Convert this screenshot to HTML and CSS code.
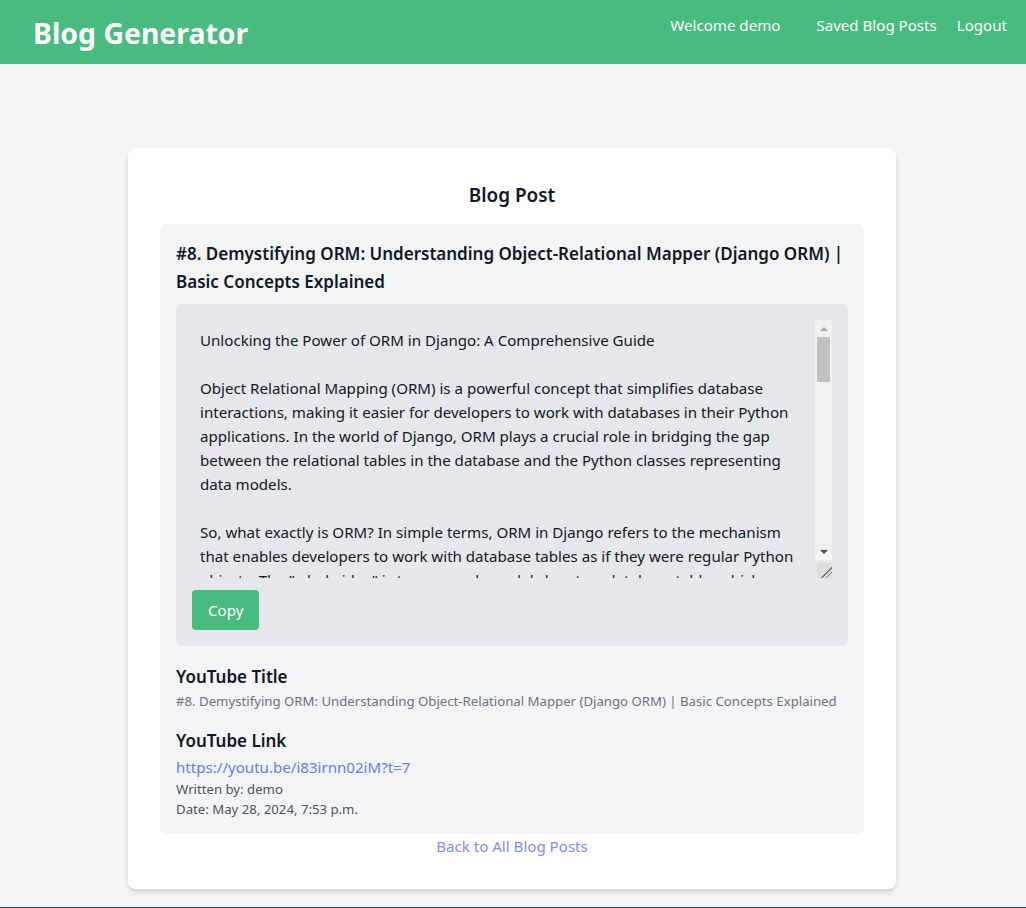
FILE: index.html
```html
<!DOCTYPE html>
<html lang="en">
<head>
<meta charset="utf-8">
<title>Blog Generator</title>
<link rel="stylesheet" href="styles.css">
</head>
<body>
<header class="topbar">
  <div class="logo">Blog Generator</div>
  <nav class="nav">
    <span class="welcome">Welcome demo</span>
    <a class="nav-link" href="#">Saved Blog Posts</a>
    <a class="nav-link" href="#">Logout</a>
  </nav>
</header>
<main class="main">
  <section class="card">
    <h2 class="card-title">Blog Post</h2>
    <div class="post">
      <h3 class="post-title">#8. Demystifying ORM: Understanding Object-Relational Mapper (Django ORM) | Basic Concepts Explained</h3>
      <div class="content-box">
        <div class="textarea-wrap">
          <textarea class="content" readonly>Unlocking the Power of ORM in Django: A Comprehensive Guide

Object Relational Mapping (ORM) is a powerful concept that simplifies database
interactions, making it easier for developers to work with databases in their Python
applications. In the world of Django, ORM plays a crucial role in bridging the gap
between the relational tables in the database and the Python classes representing
data models.

So, what exactly is ORM? In simple terms, ORM in Django refers to the mechanism
that enables developers to work with database tables as if they were regular Python
objects. The "whole idea" is to map each model class to a database table, which would
let developers write queries in Python instead of raw SQL.

Each model attribute represents a database field, and every instance of the model
corresponds to a single row in the table.</textarea>
          <div class="fake-scrollbar" aria-hidden="true">
            <div class="sb-btn sb-up"><span class="arrow-up"></span></div>
            <div class="sb-track"><div class="sb-thumb"></div></div>
            <div class="sb-btn sb-down"><span class="arrow-down"></span></div>
          </div>
        </div>
        <button class="copy-btn" type="button">Copy</button>
      </div>
      <h4 class="meta-heading">YouTube Title</h4>
      <p class="meta-text">#8. Demystifying ORM: Understanding Object-Relational Mapper (Django ORM) | Basic Concepts Explained</p>
      <h4 class="meta-heading link-heading">YouTube Link</h4>
      <a class="yt-link" href="#">https://youtu.be/i83irnn02iM?t=7</a>
      <p class="small-text">Written by: demo</p>
      <p class="small-text">Date: May 28, 2024, 7:53 p.m.</p>
    </div>
    <div class="back-row"><a class="back-link" href="#">Back to All Blog Posts</a></div>
  </section>
</main>
<footer class="footer"></footer>
</body>
</html>
```

FILE: styles.css
```css
* { box-sizing: border-box; }
html, body { margin: 0; padding: 0; }
body {
  font-family: "Noto Sans", "Open Sans", sans-serif;
  background: #f3f4f6;
  color: #111827;
  font-size: 15.1px;
  line-height: 24px;
}
.topbar {
  height: 64px;
  background: #48bb7e;
  display: flex;
  justify-content: space-between;
  align-items: flex-start;
  padding: 15px 19px 0 33px;
  color: #fff;
}
.logo {
  font-size: 28.4px;
  line-height: 36px;
  font-weight: 700;
}
.nav {
  display: flex;
  margin-top: -2px;
}
.welcome { margin-right: 36px; }
.nav-link { color: #fff; text-decoration: none; }
.nav-link + .nav-link { margin-left: 20px; }
.main {
  padding: 84px 2px 0 0;
}
.card {
  width: 768px;
  margin: 0 auto;
  background: #fff;
  border-radius: 8px;
  box-shadow: 0 4px 6px -1px rgba(0,0,0,0.12), 0 2px 4px -1px rgba(0,0,0,0.07);
  padding: 33px 32px 31px;
}
.card-title {
  margin: 0 0 15px;
  text-align: center;
  font-size: 18.9px;
  line-height: 28px;
  font-weight: 600;
}
.post {
  background: #f3f4f6;
  border-radius: 6px;
  padding: 16px 16px 15px;
}
.post-title {
  margin: 0 0 8px;
  font-size: 17px;
  line-height: 28px;
  font-weight: 600;
}
.content-box {
  background: #e5e7eb;
  border-radius: 6px;
  padding: 16px;
}
.textarea-wrap {
  position: relative;
  width: 640px;
}
.content {
  display: block;
  width: 640px;
  height: 258px;
  border: none;
  outline: none;
  background: #e5e7eb;
  padding: 8px 25px 8px 8px;
  font-family: inherit;
  font-size: 15.1px;
  line-height: 24px;
  color: #111827;
  resize: vertical;
  white-space: pre-wrap;
  overflow: hidden;
}
.content::-webkit-resizer {
  background-color: #dcdcdc;
  background-image:
    linear-gradient(135deg, transparent 62%, #777 62%, #777 67%, transparent 67%, transparent 78%, #777 78%, #777 83%, transparent 83%);
}
.fake-scrollbar {
  position: absolute;
  top: 0;
  right: 0;
  width: 17px;
  height: 240px;
  background: #f1f1f1;
  display: flex;
  flex-direction: column;
}
.sb-btn {
  height: 17px;
  display: flex;
  align-items: center;
  justify-content: center;
}
.arrow-up {
  width: 0;
  height: 0;
  border-left: 4px solid transparent;
  border-right: 4px solid transparent;
  border-bottom: 4px solid #a3a3a3;
}
.arrow-down {
  width: 0;
  height: 0;
  border-left: 4px solid transparent;
  border-right: 4px solid transparent;
  border-top: 4px solid #505050;
}
.sb-track {
  flex: 1;
  padding: 0 2px;
}
.sb-thumb {
  height: 45px;
  background: #c1c1c1;
}
.copy-btn {
  margin-top: 12px;
  background: #48bb7e;
  color: #fff;
  border: none;
  border-radius: 4px;
  font-family: inherit;
  font-size: 15.1px;
  line-height: 24px;
  padding: 8px 16px;
}
.meta-heading {
  margin: 17px 0 0;
  font-size: 17px;
  line-height: 28px;
  font-weight: 600;
}
.link-heading { margin-top: 16px; }
.meta-text {
  margin: 0;
  font-size: 13.2px;
  line-height: 20px;
  color: #6b7280;
}
.yt-link {
  display: block;
  color: #667eea;
  text-decoration: none;
}
.small-text {
  margin: 0;
  font-size: 13.2px;
  line-height: 20px;
  color: #4b5563;
}
.back-row {
  text-align: center;
  padding-top: 0;
}
.back-link {
  color: #7f8cf0;
  text-decoration: none;
}
.footer {
  margin-top: 18px;
  height: 40px;
  background: #2a3a5c;
}
```
